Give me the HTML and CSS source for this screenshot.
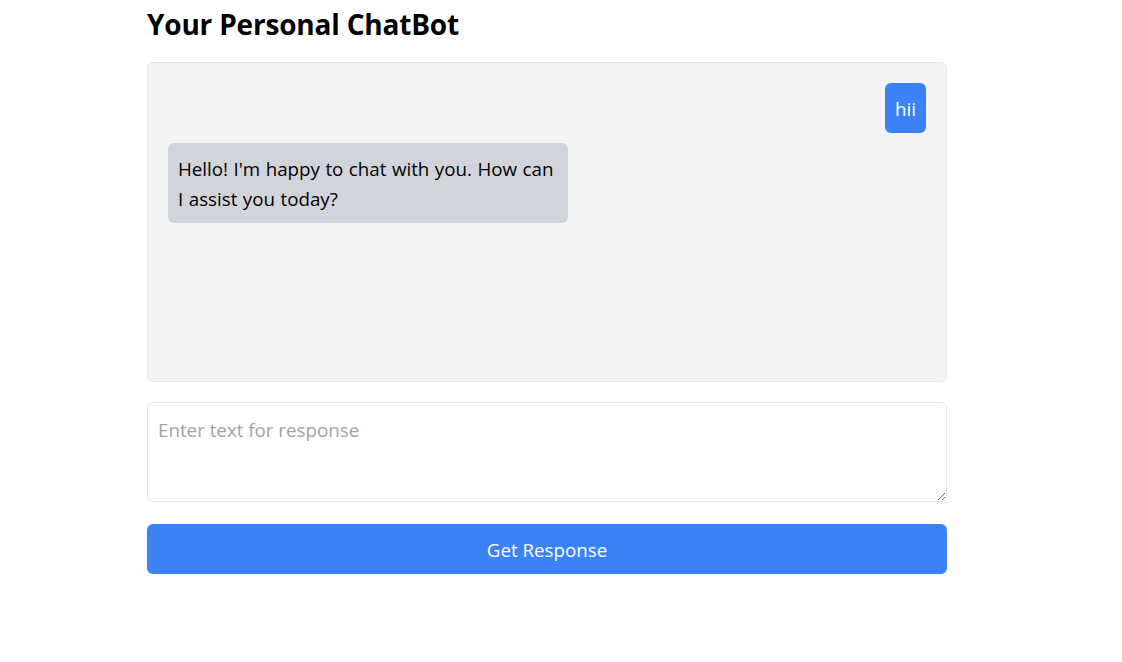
FILE: index.html
```html
<!DOCTYPE html>
<html lang="en">
<head>
<meta charset="utf-8">
<title>Your Personal ChatBot</title>
<link rel="stylesheet" href="styles.css">
</head>
<body>
<main class="app">
  <h1 class="title">Your Personal ChatBot</h1>
  <section class="chat">
    <div class="msg user">hii</div>
    <div class="msg bot">Hello! I'm happy to chat with you. How can I assist you today?</div>
  </section>
  <textarea class="input" placeholder="Enter text for response"></textarea>
  <button class="send">Get Response</button>
</main>
</body>
</html>
```
FILE: styles.css
```css
* { box-sizing: border-box; }
html, body { margin: 0; padding: 0; background: #fff; }
body {
  font-family: "Open Sans", "Noto Sans", sans-serif;
  color: #000;
}
.app {
  width: 800px;
  margin-left: 147px;
  display: flex;
  flex-direction: column;
}
.title {
  margin: 4px 0 0;
  height: 58px;
  font-size: 28px;
  line-height: 40px;
  font-weight: 700;
  letter-spacing: -0.2px;
  color: #000;
}
.chat {
  height: 320px;
  background: #f3f4f6;
  border: 1px solid #e5e7eb;
  border-radius: 6px;
  padding: 20px;
  display: flex;
  flex-direction: column;
  gap: 10px;
}
.msg {
  font-size: 18.75px;
  line-height: 30px;
  padding: 11px 10px 9px;
  border-radius: 6px;
}
.user {
  align-self: flex-end;
  background: #3b82f6;
  color: #fff;
}
.bot {
  align-self: flex-start;
  max-width: 400px;
  background: #d1d5db;
  color: #000;
  word-spacing: 0.6px;
}
.input {
  margin-top: 20px;
  height: 100px;
  width: 100%;
  border: 1px solid #e5e7eb;
  border-radius: 6px;
  padding: 12px 10px 8px;
  font-family: inherit;
  font-size: 18.75px;
  line-height: 30px;
  resize: vertical;
  outline: none;
  color: #000;
}
.input::placeholder { color: #9ca3af; }
.send {
  margin-top: 22px;
  height: 50px;
  width: 100%;
  border: none;
  border-radius: 6px;
  background: #3b82f6;
  color: #fff;
  font-family: inherit;
  font-size: 18.75px;
  padding-top: 2px;
  cursor: pointer;
}
```
